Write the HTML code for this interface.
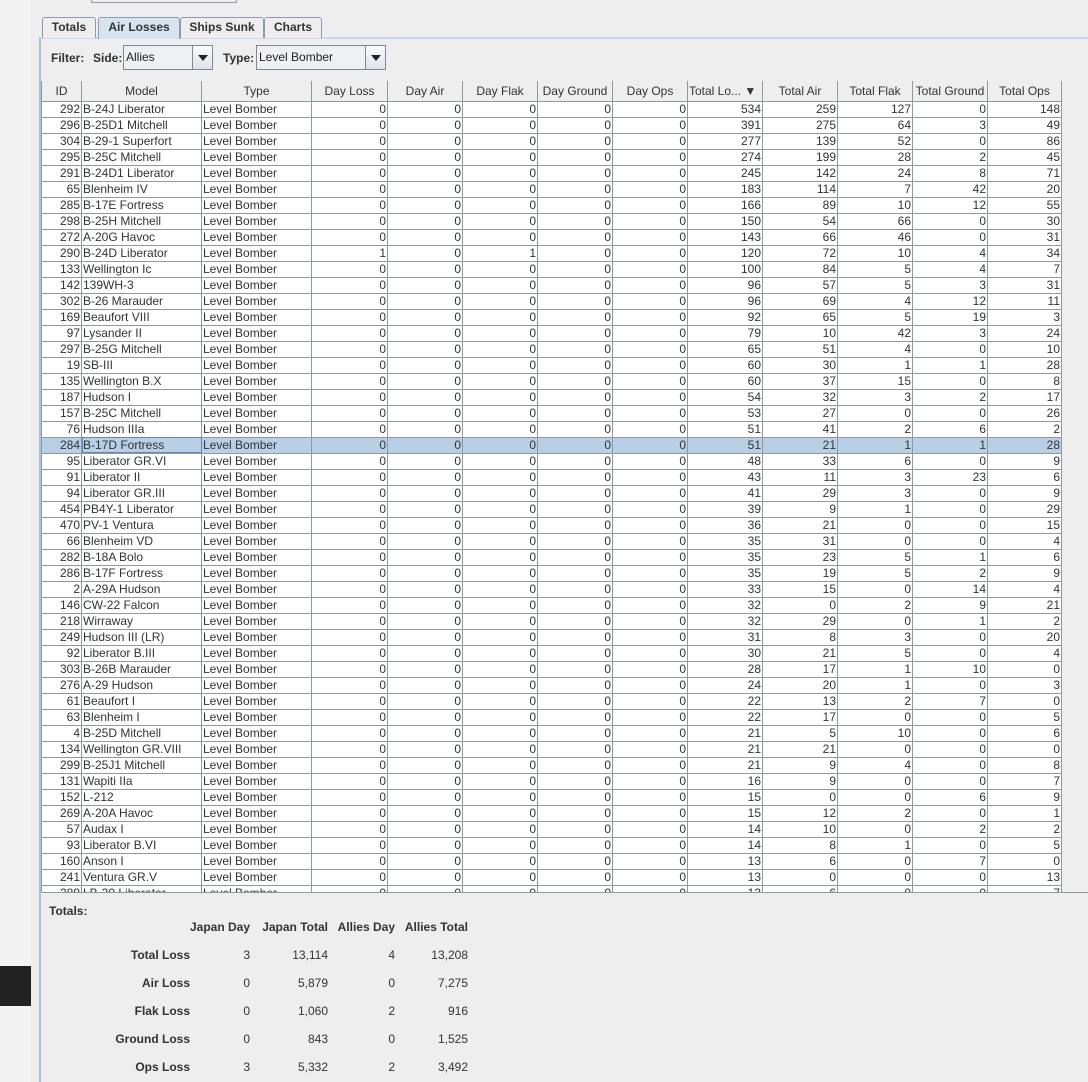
<!DOCTYPE html>
<html><head><meta charset="utf-8"><style>
*{margin:0;padding:0;box-sizing:border-box}
body{width:1088px;height:1082px;overflow:hidden;background:#eeeeee;font-family:"Liberation Sans",sans-serif;font-size:12px;color:#333;position:relative}
.a{position:absolute}
.strip{left:0;top:0;width:31px;height:1082px;background:#f3f3f3}
.tab{top:17px;height:21px;border:1px solid #8c9bb0;border-bottom:none;border-radius:3px 3px 0 0;font-weight:bold;text-align:center;line-height:19px;background:#eeeeee}
.combo{top:45px;height:25px;border:1px solid #7a8a99;background:#eef0f2;line-height:23px;padding-left:2px;color:#222}
.combo .btn{position:absolute;right:0;top:0;width:20px;height:23px;border-left:1px solid #7a8a99;background:linear-gradient(#fafbfc,#dde3ea)}
.combo .btn:after{content:"";position:absolute;left:5px;top:9px;border-left:5px solid transparent;border-right:5px solid transparent;border-top:6px solid #222}
.b{font-weight:bold}
.wrap{left:41px;top:81px;width:1021px;height:811px;overflow:hidden;background:#fff}
table{border-collapse:collapse;table-layout:fixed;width:1021px}
td,th{border:1px solid #8e98a6;height:16px;padding:0 1px;white-space:nowrap;overflow:hidden;line-height:14px;font-size:12px;color:#333}
th{font-weight:normal;background:#eeeeee;height:20px;text-align:center;border-top:none}
td{text-align:right}
td:nth-child(2),td:nth-child(3){text-align:left}
tr.sel td{background:#b8cfe5}
tr.sel td:nth-child(2){outline:1px solid #6382bf;outline-offset:-1px}
.r{text-align:right}
</style></head><body>
<div class="a strip"></div>
<div class="a" style="left:0;top:966px;width:31px;height:40px;background:#222"></div>
<div class="a" style="left:91px;top:-2px;width:146px;height:5px;border:1px solid #8c9bb0;background:#eee"></div>
<div class="a" style="left:39px;top:37px;width:1049px;height:1045px;border-left:2px solid #a9c0dc;border-top:2px solid #c8d8ee"></div>
<div class="a tab" style="left:42px;width:54px">Totals</div>
<div class="a tab" style="left:98px;width:82px;background:#d6e3f1;height:22px">Air Losses</div>
<div class="a tab" style="left:180px;width:84px">Ships Sunk</div>
<div class="a tab" style="left:264px;width:58px">Charts</div>
<div class="a b" style="left:51px;top:51px">Filter:</div>
<div class="a b" style="left:93px;top:51px">Side:</div>
<div class="a combo" style="left:123px;width:90px">Allies<div class="btn"></div></div>
<div class="a b" style="left:223px;top:51px">Type:</div>
<div class="a combo" style="left:256px;width:130px">Level Bomber<div class="btn"></div></div>
<div class="a wrap"><table>
<colgroup><col style="width:40px"><col style="width:120px"><col style="width:110px"><col style="width:76px"><col style="width:75px"><col style="width:75px"><col style="width:75px"><col style="width:75px"><col style="width:75px"><col style="width:75px"><col style="width:75px"><col style="width:75px"><col style="width:74px"></colgroup>
<tr><th>ID</th><th>Model</th><th>Type</th><th>Day Loss</th><th>Day Air</th><th>Day Flak</th><th>Day Ground</th><th>Day Ops</th><th style="text-align:left">Total Lo... &#9660;</th><th>Total Air</th><th>Total Flak</th><th>Total Ground</th><th>Total Ops</th></tr>
<tr><td>292</td><td>B-24J Liberator</td><td>Level Bomber</td><td>0</td><td>0</td><td>0</td><td>0</td><td>0</td><td>534</td><td>259</td><td>127</td><td>0</td><td>148</td></tr>
<tr><td>296</td><td>B-25D1 Mitchell</td><td>Level Bomber</td><td>0</td><td>0</td><td>0</td><td>0</td><td>0</td><td>391</td><td>275</td><td>64</td><td>3</td><td>49</td></tr>
<tr><td>304</td><td>B-29-1 Superfort</td><td>Level Bomber</td><td>0</td><td>0</td><td>0</td><td>0</td><td>0</td><td>277</td><td>139</td><td>52</td><td>0</td><td>86</td></tr>
<tr><td>295</td><td>B-25C Mitchell</td><td>Level Bomber</td><td>0</td><td>0</td><td>0</td><td>0</td><td>0</td><td>274</td><td>199</td><td>28</td><td>2</td><td>45</td></tr>
<tr><td>291</td><td>B-24D1 Liberator</td><td>Level Bomber</td><td>0</td><td>0</td><td>0</td><td>0</td><td>0</td><td>245</td><td>142</td><td>24</td><td>8</td><td>71</td></tr>
<tr><td>65</td><td>Blenheim IV</td><td>Level Bomber</td><td>0</td><td>0</td><td>0</td><td>0</td><td>0</td><td>183</td><td>114</td><td>7</td><td>42</td><td>20</td></tr>
<tr><td>285</td><td>B-17E Fortress</td><td>Level Bomber</td><td>0</td><td>0</td><td>0</td><td>0</td><td>0</td><td>166</td><td>89</td><td>10</td><td>12</td><td>55</td></tr>
<tr><td>298</td><td>B-25H Mitchell</td><td>Level Bomber</td><td>0</td><td>0</td><td>0</td><td>0</td><td>0</td><td>150</td><td>54</td><td>66</td><td>0</td><td>30</td></tr>
<tr><td>272</td><td>A-20G Havoc</td><td>Level Bomber</td><td>0</td><td>0</td><td>0</td><td>0</td><td>0</td><td>143</td><td>66</td><td>46</td><td>0</td><td>31</td></tr>
<tr><td>290</td><td>B-24D Liberator</td><td>Level Bomber</td><td>1</td><td>0</td><td>1</td><td>0</td><td>0</td><td>120</td><td>72</td><td>10</td><td>4</td><td>34</td></tr>
<tr><td>133</td><td>Wellington Ic</td><td>Level Bomber</td><td>0</td><td>0</td><td>0</td><td>0</td><td>0</td><td>100</td><td>84</td><td>5</td><td>4</td><td>7</td></tr>
<tr><td>142</td><td>139WH-3</td><td>Level Bomber</td><td>0</td><td>0</td><td>0</td><td>0</td><td>0</td><td>96</td><td>57</td><td>5</td><td>3</td><td>31</td></tr>
<tr><td>302</td><td>B-26 Marauder</td><td>Level Bomber</td><td>0</td><td>0</td><td>0</td><td>0</td><td>0</td><td>96</td><td>69</td><td>4</td><td>12</td><td>11</td></tr>
<tr><td>169</td><td>Beaufort VIII</td><td>Level Bomber</td><td>0</td><td>0</td><td>0</td><td>0</td><td>0</td><td>92</td><td>65</td><td>5</td><td>19</td><td>3</td></tr>
<tr><td>97</td><td>Lysander II</td><td>Level Bomber</td><td>0</td><td>0</td><td>0</td><td>0</td><td>0</td><td>79</td><td>10</td><td>42</td><td>3</td><td>24</td></tr>
<tr><td>297</td><td>B-25G Mitchell</td><td>Level Bomber</td><td>0</td><td>0</td><td>0</td><td>0</td><td>0</td><td>65</td><td>51</td><td>4</td><td>0</td><td>10</td></tr>
<tr><td>19</td><td>SB-III</td><td>Level Bomber</td><td>0</td><td>0</td><td>0</td><td>0</td><td>0</td><td>60</td><td>30</td><td>1</td><td>1</td><td>28</td></tr>
<tr><td>135</td><td>Wellington B.X</td><td>Level Bomber</td><td>0</td><td>0</td><td>0</td><td>0</td><td>0</td><td>60</td><td>37</td><td>15</td><td>0</td><td>8</td></tr>
<tr><td>187</td><td>Hudson I</td><td>Level Bomber</td><td>0</td><td>0</td><td>0</td><td>0</td><td>0</td><td>54</td><td>32</td><td>3</td><td>2</td><td>17</td></tr>
<tr><td>157</td><td>B-25C Mitchell</td><td>Level Bomber</td><td>0</td><td>0</td><td>0</td><td>0</td><td>0</td><td>53</td><td>27</td><td>0</td><td>0</td><td>26</td></tr>
<tr><td>76</td><td>Hudson IIIa</td><td>Level Bomber</td><td>0</td><td>0</td><td>0</td><td>0</td><td>0</td><td>51</td><td>41</td><td>2</td><td>6</td><td>2</td></tr>
<tr class="sel"><td>284</td><td>B-17D Fortress</td><td>Level Bomber</td><td>0</td><td>0</td><td>0</td><td>0</td><td>0</td><td>51</td><td>21</td><td>1</td><td>1</td><td>28</td></tr>
<tr><td>95</td><td>Liberator GR.VI</td><td>Level Bomber</td><td>0</td><td>0</td><td>0</td><td>0</td><td>0</td><td>48</td><td>33</td><td>6</td><td>0</td><td>9</td></tr>
<tr><td>91</td><td>Liberator II</td><td>Level Bomber</td><td>0</td><td>0</td><td>0</td><td>0</td><td>0</td><td>43</td><td>11</td><td>3</td><td>23</td><td>6</td></tr>
<tr><td>94</td><td>Liberator GR.III</td><td>Level Bomber</td><td>0</td><td>0</td><td>0</td><td>0</td><td>0</td><td>41</td><td>29</td><td>3</td><td>0</td><td>9</td></tr>
<tr><td>454</td><td>PB4Y-1 Liberator</td><td>Level Bomber</td><td>0</td><td>0</td><td>0</td><td>0</td><td>0</td><td>39</td><td>9</td><td>1</td><td>0</td><td>29</td></tr>
<tr><td>470</td><td>PV-1 Ventura</td><td>Level Bomber</td><td>0</td><td>0</td><td>0</td><td>0</td><td>0</td><td>36</td><td>21</td><td>0</td><td>0</td><td>15</td></tr>
<tr><td>66</td><td>Blenheim VD</td><td>Level Bomber</td><td>0</td><td>0</td><td>0</td><td>0</td><td>0</td><td>35</td><td>31</td><td>0</td><td>0</td><td>4</td></tr>
<tr><td>282</td><td>B-18A Bolo</td><td>Level Bomber</td><td>0</td><td>0</td><td>0</td><td>0</td><td>0</td><td>35</td><td>23</td><td>5</td><td>1</td><td>6</td></tr>
<tr><td>286</td><td>B-17F Fortress</td><td>Level Bomber</td><td>0</td><td>0</td><td>0</td><td>0</td><td>0</td><td>35</td><td>19</td><td>5</td><td>2</td><td>9</td></tr>
<tr><td>2</td><td>A-29A Hudson</td><td>Level Bomber</td><td>0</td><td>0</td><td>0</td><td>0</td><td>0</td><td>33</td><td>15</td><td>0</td><td>14</td><td>4</td></tr>
<tr><td>146</td><td>CW-22 Falcon</td><td>Level Bomber</td><td>0</td><td>0</td><td>0</td><td>0</td><td>0</td><td>32</td><td>0</td><td>2</td><td>9</td><td>21</td></tr>
<tr><td>218</td><td>Wirraway</td><td>Level Bomber</td><td>0</td><td>0</td><td>0</td><td>0</td><td>0</td><td>32</td><td>29</td><td>0</td><td>1</td><td>2</td></tr>
<tr><td>249</td><td>Hudson III (LR)</td><td>Level Bomber</td><td>0</td><td>0</td><td>0</td><td>0</td><td>0</td><td>31</td><td>8</td><td>3</td><td>0</td><td>20</td></tr>
<tr><td>92</td><td>Liberator B.III</td><td>Level Bomber</td><td>0</td><td>0</td><td>0</td><td>0</td><td>0</td><td>30</td><td>21</td><td>5</td><td>0</td><td>4</td></tr>
<tr><td>303</td><td>B-26B Marauder</td><td>Level Bomber</td><td>0</td><td>0</td><td>0</td><td>0</td><td>0</td><td>28</td><td>17</td><td>1</td><td>10</td><td>0</td></tr>
<tr><td>276</td><td>A-29 Hudson</td><td>Level Bomber</td><td>0</td><td>0</td><td>0</td><td>0</td><td>0</td><td>24</td><td>20</td><td>1</td><td>0</td><td>3</td></tr>
<tr><td>61</td><td>Beaufort I</td><td>Level Bomber</td><td>0</td><td>0</td><td>0</td><td>0</td><td>0</td><td>22</td><td>13</td><td>2</td><td>7</td><td>0</td></tr>
<tr><td>63</td><td>Blenheim I</td><td>Level Bomber</td><td>0</td><td>0</td><td>0</td><td>0</td><td>0</td><td>22</td><td>17</td><td>0</td><td>0</td><td>5</td></tr>
<tr><td>4</td><td>B-25D Mitchell</td><td>Level Bomber</td><td>0</td><td>0</td><td>0</td><td>0</td><td>0</td><td>21</td><td>5</td><td>10</td><td>0</td><td>6</td></tr>
<tr><td>134</td><td>Wellington GR.VIII</td><td>Level Bomber</td><td>0</td><td>0</td><td>0</td><td>0</td><td>0</td><td>21</td><td>21</td><td>0</td><td>0</td><td>0</td></tr>
<tr><td>299</td><td>B-25J1 Mitchell</td><td>Level Bomber</td><td>0</td><td>0</td><td>0</td><td>0</td><td>0</td><td>21</td><td>9</td><td>4</td><td>0</td><td>8</td></tr>
<tr><td>131</td><td>Wapiti IIa</td><td>Level Bomber</td><td>0</td><td>0</td><td>0</td><td>0</td><td>0</td><td>16</td><td>9</td><td>0</td><td>0</td><td>7</td></tr>
<tr><td>152</td><td>L-212</td><td>Level Bomber</td><td>0</td><td>0</td><td>0</td><td>0</td><td>0</td><td>15</td><td>0</td><td>0</td><td>6</td><td>9</td></tr>
<tr><td>269</td><td>A-20A Havoc</td><td>Level Bomber</td><td>0</td><td>0</td><td>0</td><td>0</td><td>0</td><td>15</td><td>12</td><td>2</td><td>0</td><td>1</td></tr>
<tr><td>57</td><td>Audax I</td><td>Level Bomber</td><td>0</td><td>0</td><td>0</td><td>0</td><td>0</td><td>14</td><td>10</td><td>0</td><td>2</td><td>2</td></tr>
<tr><td>93</td><td>Liberator B.VI</td><td>Level Bomber</td><td>0</td><td>0</td><td>0</td><td>0</td><td>0</td><td>14</td><td>8</td><td>1</td><td>0</td><td>5</td></tr>
<tr><td>160</td><td>Anson I</td><td>Level Bomber</td><td>0</td><td>0</td><td>0</td><td>0</td><td>0</td><td>13</td><td>6</td><td>0</td><td>7</td><td>0</td></tr>
<tr><td>241</td><td>Ventura GR.V</td><td>Level Bomber</td><td>0</td><td>0</td><td>0</td><td>0</td><td>0</td><td>13</td><td>0</td><td>0</td><td>0</td><td>13</td></tr>
<tr><td>289</td><td>LB-30 Liberator</td><td>Level Bomber</td><td>0</td><td>0</td><td>0</td><td>0</td><td>0</td><td>13</td><td>6</td><td>0</td><td>0</td><td>7</td></tr>
</table></div>
<div class="a" style="left:41px;top:892px;width:1047px;height:1px;background:#8e98a6"></div>
<div class="a b" style="left:49px;top:904px">Totals:</div>
<div class="a b r" style="left:150px;top:920px;width:100px">Japan Day</div>
<div class="a b r" style="left:228px;top:920px;width:100px">Japan Total</div>
<div class="a b r" style="left:295px;top:920px;width:100px">Allies Day</div>
<div class="a b r" style="left:368px;top:920px;width:100px">Allies Total</div>
<div class="a b r" style="left:60px;top:948px;width:130px">Total Loss</div>
<div class="a r" style="left:150px;top:948px;width:100px">3</div><div class="a r" style="left:228px;top:948px;width:100px">13,114</div><div class="a r" style="left:295px;top:948px;width:100px">4</div><div class="a r" style="left:368px;top:948px;width:100px">13,208</div>
<div class="a b r" style="left:60px;top:976px;width:130px">Air Loss</div>
<div class="a r" style="left:150px;top:976px;width:100px">0</div><div class="a r" style="left:228px;top:976px;width:100px">5,879</div><div class="a r" style="left:295px;top:976px;width:100px">0</div><div class="a r" style="left:368px;top:976px;width:100px">7,275</div>
<div class="a b r" style="left:60px;top:1004px;width:130px">Flak Loss</div>
<div class="a r" style="left:150px;top:1004px;width:100px">0</div><div class="a r" style="left:228px;top:1004px;width:100px">1,060</div><div class="a r" style="left:295px;top:1004px;width:100px">2</div><div class="a r" style="left:368px;top:1004px;width:100px">916</div>
<div class="a b r" style="left:60px;top:1032px;width:130px">Ground Loss</div>
<div class="a r" style="left:150px;top:1032px;width:100px">0</div><div class="a r" style="left:228px;top:1032px;width:100px">843</div><div class="a r" style="left:295px;top:1032px;width:100px">0</div><div class="a r" style="left:368px;top:1032px;width:100px">1,525</div>
<div class="a b r" style="left:60px;top:1060px;width:130px">Ops Loss</div>
<div class="a r" style="left:150px;top:1060px;width:100px">3</div><div class="a r" style="left:228px;top:1060px;width:100px">5,332</div><div class="a r" style="left:295px;top:1060px;width:100px">2</div><div class="a r" style="left:368px;top:1060px;width:100px">3,492</div>
</body></html>
